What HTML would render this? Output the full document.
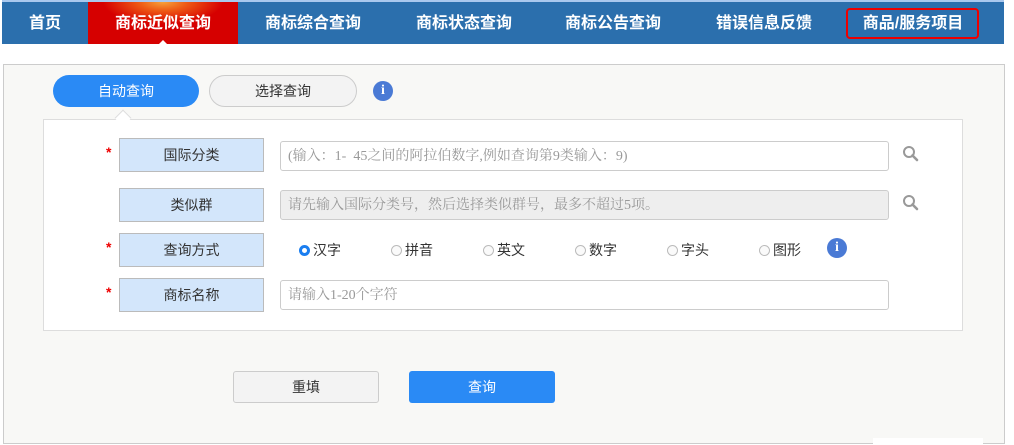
<!DOCTYPE html>
<html><head><meta charset="utf-8"><style>
*{margin:0;padding:0;box-sizing:border-box}
body{width:1014px;height:445px;background:#fff;font-family:"Liberation Sans","Noto Sans CJK SC",sans-serif;position:relative;overflow:hidden}
.a{position:absolute}
.topline{left:2px;top:0;width:1002px;height:2px;background:#a9c8ee}
.nav{left:2px;top:2px;width:1002px;height:42px;background:#2b6fad}
.nt{top:3px;height:42px;line-height:42px;color:#fff;font-size:16px;font-weight:bold;text-align:center;transform:translateX(-50%);white-space:nowrap}
.red{left:88px;top:2px;width:150px;height:42px;background:radial-gradient(ellipse 60px 22px at 50% 0%,#f7a23a 0%,#ee5a15 40%,#d60000 100%)}
.redbox{left:846px;top:8px;width:133px;height:31px;border:2px solid #e00;border-radius:4px}
.panel{left:3px;top:64px;width:1002px;height:380px;background:#f8f8f6;border:1px solid #ccc}
.tab{top:75px;height:32px;border-radius:16px;line-height:32px;text-align:center;font-size:14px}
.inner{left:43px;top:119px;width:920px;height:212px;background:#fff;border:1px solid #ddd}
.lbl{left:119px;width:145px;height:34px;background:#d3e6fb;border:1px solid #bbb;text-align:center;line-height:33px;font-size:14px;color:#333}
.star{left:106px;color:#e00;font-size:14px;font-weight:bold}
.inp{left:280px;width:609px;height:30px;border:1px solid #ccc;border-radius:3px;background:#fff;font-size:14px;color:#999;line-height:30px;padding-left:7px;font-family:"Liberation Serif","Noto Serif CJK SC",serif}
.info{width:20px;height:20px;border-radius:50%;background:#4a7ad5;color:#fff;font-weight:bold;font-size:14px;text-align:center;line-height:20px;font-family:"Liberation Serif",serif}
.rad{top:242px;font-size:14px;color:#333;line-height:16px;white-space:nowrap}
.rad i{display:inline-block;width:11px;height:11px;border:1px solid #bbb;border-radius:50%;margin-right:3px;vertical-align:-1px;background:#fafafa}
.rad i.on{border:3px solid #1a7ef0;background:#fff}
.btn{top:371px;width:146px;height:32px;border-radius:3px;text-align:center;line-height:31px;font-size:14px}
</style></head><body>
<div class="a topline"></div>
<div class="a nav"></div>
<div class="a red"></div>
<div class="a" style="top:40px;width:0;height:0;border-left:4px solid transparent;border-right:4px solid transparent;border-bottom:4px solid #fff;left:159px"></div>
<div class="a nt" style="left:45px">首页</div>
<div class="a nt" style="left:163px">商标近似查询</div>
<div class="a nt" style="left:313px">商标综合查询</div>
<div class="a nt" style="left:464px">商标状态查询</div>
<div class="a nt" style="left:613px">商标公告查询</div>
<div class="a nt" style="left:764px">错误信息反馈</div>
<div class="a nt" style="left:913px">商品/服务项目</div>
<div class="a redbox"></div>

<div class="a panel"></div>
<div class="a tab" style="left:53px;width:146px;background:#2a8af5;color:#fff">自动查询</div>
<div class="a tab" style="left:209px;width:148px;background:#f3f3f3;border:1px solid #ccc;color:#333;line-height:30px">选择查询</div>
<div class="a info" style="left:373px;top:81px">i</div>
<div class="a inner"></div>
<div class="a" style="left:117px;top:112px;width:12px;height:12px;background:#fff;border-left:1px solid #ddd;border-top:1px solid #ddd;transform:rotate(45deg)"></div>
<div class="a" style="left:110px;top:120px;width:26px;height:4px;background:#fff"></div>

<div class="a star" style="top:144px">*</div>
<div class="a lbl" style="top:138px">国际分类</div>
<div class="a inp" style="top:141px">(输入：1-&nbsp; 45之间的阿拉伯数字,例如查询第9类输入：9)</div>
<div class="a lbl" style="top:188px">类似群</div>
<div class="a inp" style="top:190px;background:#eee">请先输入国际分类号，然后选择类似群号，最多不超过5项。</div>
<div class="a star" style="top:239px">*</div>
<div class="a lbl" style="top:233px">查询方式</div>
<div class="a star" style="top:284px">*</div>
<div class="a lbl" style="top:278px">商标名称</div>
<div class="a inp" style="top:280px">请输入1-20个字符</div>

<svg class="a" style="left:902px;top:145px" width="18" height="18" viewBox="0 0 18 18"><circle cx="7" cy="7" r="5" fill="none" stroke="#999" stroke-width="2"/><path d="M10.5 10.5L15 15" stroke="#999" stroke-width="2.6" stroke-linecap="round"/></svg>
<svg class="a" style="left:902px;top:194px" width="18" height="18" viewBox="0 0 18 18"><circle cx="7" cy="7" r="5" fill="none" stroke="#999" stroke-width="2"/><path d="M10.5 10.5L15 15" stroke="#999" stroke-width="2.6" stroke-linecap="round"/></svg>

<div class="a rad" style="left:299px"><i class="on"></i>汉字</div>
<div class="a rad" style="left:391px"><i></i>拼音</div>
<div class="a rad" style="left:483px"><i></i>英文</div>
<div class="a rad" style="left:575px"><i></i>数字</div>
<div class="a rad" style="left:667px"><i></i>字头</div>
<div class="a rad" style="left:759px"><i></i>图形</div>
<div class="a info" style="left:827px;top:238px">i</div>

<div class="a btn" style="left:233px;background:#f3f3f3;border:1px solid #ccc;color:#333">重填</div>
<div class="a btn" style="left:409px;background:#2a8af5;color:#fff;line-height:32px">查询</div>
<div class="a" style="left:873px;top:438px;width:110px;height:7px;background:#fff"></div>
</body></html>
